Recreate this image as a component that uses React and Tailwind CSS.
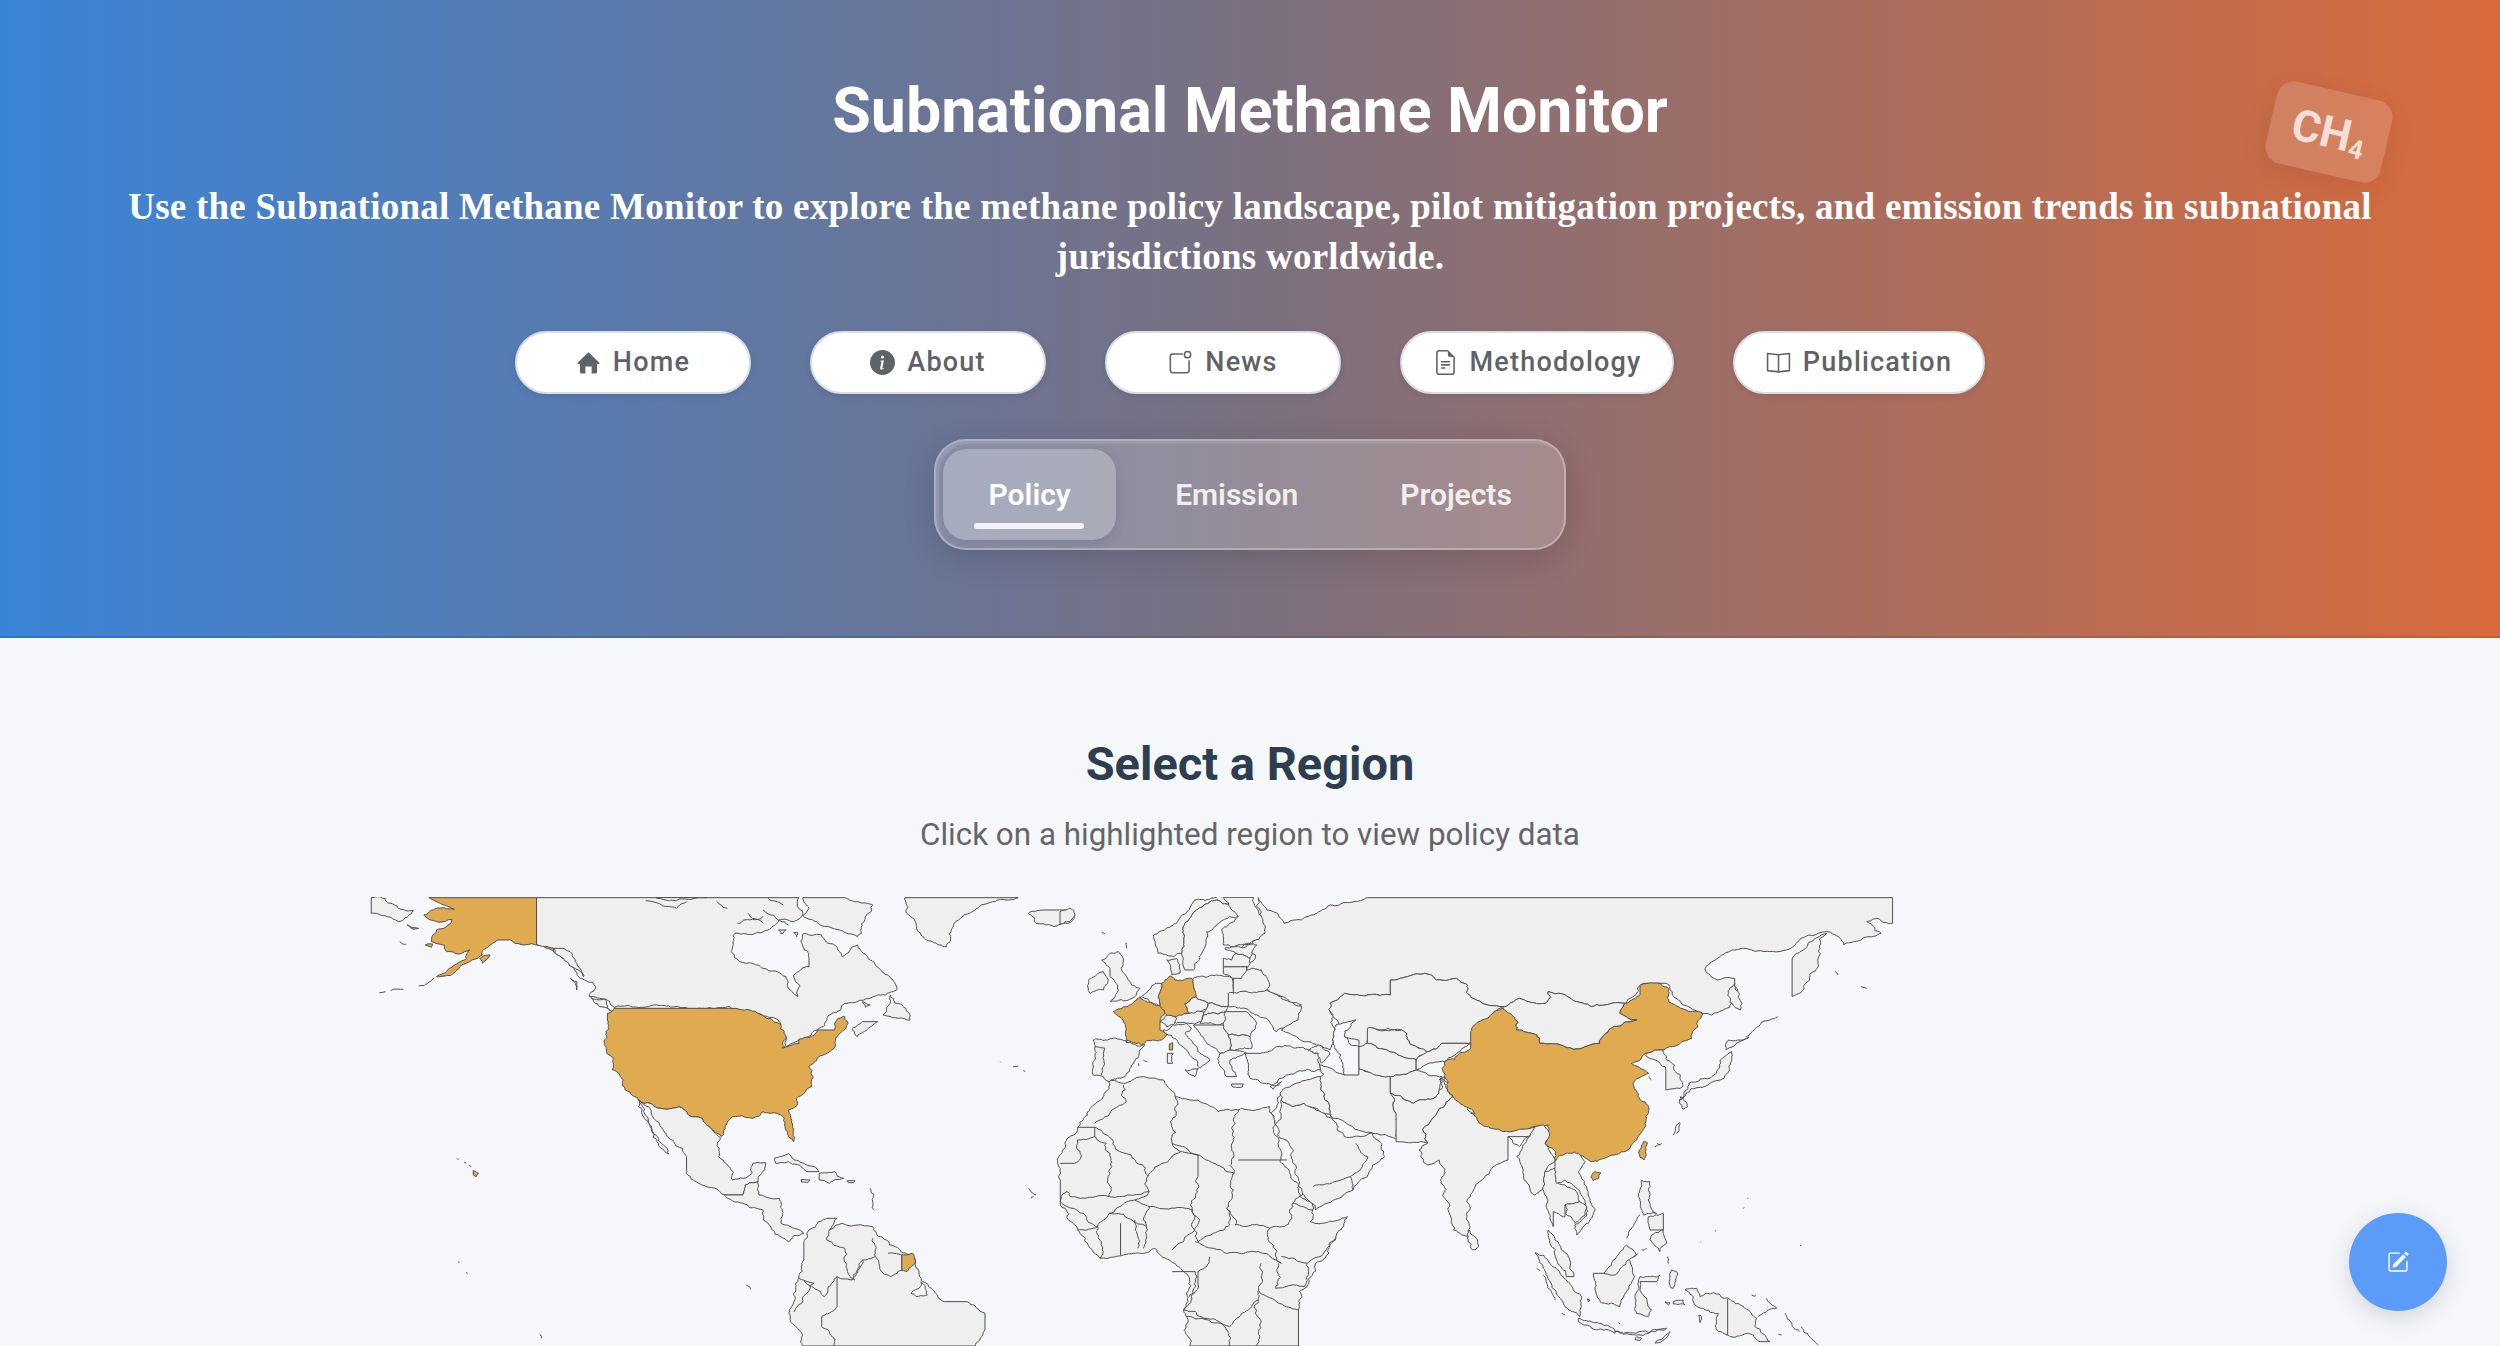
import React from 'react'
import {
  BsInfoCircleFill,
  BsFileEarmarkText,
  BsPencilSquare,
} from 'react-icons/bs'

function HomeIcon({ className }) {
  return (
    <svg className={className} viewBox="0 0 16 16" fill="currentColor">
      <path d="M8 1.5 L15 8.2 Q15.3 9 14.5 9 H13.5 V14 Q13.5 15 12.5 15 H10 V10.5 H6 V15 H3.5 Q2.5 15 2.5 14 V9 H1.5 Q0.7 9 1 8.2 Z" />
    </svg>
  )
}

function NewsIcon({ className }) {
  return (
    <svg className={className} viewBox="0 0 16 16" fill="none" stroke="currentColor" strokeWidth="1">
      <path d="M9.5 2.5 H3 Q1.5 2.5 1.5 4 V13 Q1.5 14.5 3 14.5 H12 Q13.5 14.5 13.5 13 V6.5" />
      <circle cx="12.5" cy="3" r="2" />
    </svg>
  )
}

function BookIcon({ className }) {
  return (
    <svg className={className} viewBox="0 0 16 16" fill="none" stroke="currentColor" strokeWidth="1" strokeLinejoin="round">
      <path d="M8 3 L1 2.2 V13.2 L8 14 L15 13.2 V2.2 Z M8 3 V14" />
    </svg>
  )
}

const NAV = [
  { label: 'Home', icon: HomeIcon, width: 'w-[236px]' },
  { label: 'About', icon: BsInfoCircleFill, width: 'w-[236px]' },
  { label: 'News', icon: NewsIcon, width: 'w-[236px]' },
  { label: 'Methodology', icon: BsFileEarmarkText, width: 'w-[274px]' },
  { label: 'Publication', icon: BookIcon, width: 'w-[252px]' },
]

const LAND = '#efefef'
const GOLD = '#e0ab50'
const SEA = '#f5f7fb'

// map outlines, traced per region in the coordinates of the crop they came from
const AMERICAS = [
  [LAND, 'M22,53 L50,55 L75,85 L105,92 L95,108 L75,125 L40,105 L22,100 Z'],
  [GOLD, 'M135,53 L346,53 L346,193 L360,197 L380,205 L400,225 L420,250 L438,290 L425,270 L405,240 L385,215 L360,197 L320,195 L295,180 L270,180 L255,195 L240,225 L215,245 L190,270 L150,290 L175,265 L205,240 L215,210 L190,222 L170,215 L165,195 L140,185 L150,150 L178,130 L180,118 L150,125 L125,105 L150,85 L185,88 L165,75 Z'],
  [GOLD, 'M92,135 L115,145 L105,148 Z M128,195 L142,192 L140,202 Z M235,235 L255,225 L240,250 Z'],
  [LAND, 'M346,53 L860,53 L868,105 L850,125 L820,120 L800,150 L735,160 L728,215 L745,245 L790,265 L835,290 L838,320 L858,350 L862,320 L850,285 L880,260 L880,235 L868,200 L870,160 L905,165 L940,215 L945,230 L975,195 L1000,240 L1040,295 L1052,330 L1030,345 L950,370 L900,445 L885,465 L860,480 L830,505 L835,470 L825,430 L785,402 L728,385 L725,380 L498,383 L470,355 L450,350 L462,325 L440,300 L420,265 L400,235 L380,205 L346,193 Z'],
  ['none', 'M560,62 L620,85 M620,85 L640,65 M700,65 L720,85 M760,100 L790,130 M790,90 L840,135 M740,130 L790,110 M800,55 L830,75'],
  [SEA, 'M820,150 L835,150 L825,162 Z M850,158 L858,158 L856,170 Z M875,60 L905,60 L890,78 Z M580,53 L680,53 L620,62 Z'],
  [LAND, 'M380,205 L400,205 L425,250 L438,290 L415,260 Z M412,295 L425,305 L425,330 Z M452,352 L480,358 L498,395 L470,380 Z'],
  [LAND, 'M868,53 L950,53 L1005,75 L990,115 L975,170 L940,150 L895,125 L870,110 L880,85 Z'],
  [LAND, 'M1068,53 L1290,53 L1240,65 L1200,95 L1165,130 L1150,200 L1110,180 L1090,130 L1070,90 Z'],
  [LAND, 'M1040,345 L1070,385 L1078,420 L1055,415 L1025,405 Z M985,365 L1000,375 L990,382 Z M985,425 L1015,425 L975,470 L965,445 Z'],
  [LAND, 'M1310,100 L1340,90 L1395,90 L1400,115 L1360,140 L1325,130 Z'],
  [GOLD, 'M498,385 L725,385 L780,400 L825,432 L835,470 L828,505 L860,492 L860,478 L885,470 L895,450 L930,450 L938,415 L950,410 L953,445 L935,470 L925,510 L900,530 L880,560 L885,620 L860,650 L840,690 L850,785 L840,770 L825,705 L790,695 L770,715 L730,710 L708,770 L690,750 L670,715 L650,710 L625,680 L590,685 L545,660 L520,630 L495,570 L483,510 L485,420 L485,400 Z'],
  [LAND, 'M545,660 L590,685 L625,680 L650,710 L670,715 L690,750 L706,772 L703,830 L730,900 L760,890 L770,850 L795,848 L780,905 L755,915 L750,945 L715,945 L670,915 L640,870 L640,830 L600,760 L565,680 Z'],
  [LAND, 'M548,665 L565,720 L605,822 L585,790 L560,720 Z'],
  [LAND, 'M715,945 L750,945 L755,915 L780,905 L782,945 L822,955 L825,1030 L870,1060 L840,1085 L800,1030 L790,990 L750,970 Z'],
  [LAND, 'M812,835 L840,820 L870,850 L900,875 L875,875 L840,845 L815,850 Z M900,880 L930,875 L948,895 L920,910 L900,900 Z M865,898 L882,900 L878,908 L865,906 Z M955,902 L970,902 L968,908 L957,908 Z'],
  [LAND, 'M870,1085 L880,1050 L915,1015 L935,1015 L920,1050 L945,1030 L1005,1040 L1020,1070 L1060,1115 L1085,1130 L1100,1195 L1145,1265 L1190,1265 L1225,1300 L1225,1350 L1205,1398 L868,1398 L840,1300 L860,1195 L870,1140 Z'],
  [SEA, 'M1080,1240 L1100,1205 L1112,1245 L1090,1250 Z'],
  ['none', 'M920,1050 L915,1080 L950,1105 L955,1170 L970,1200 L985,1140 L1010,1130 L1005,1075 M1010,1130 L1020,1170 L1040,1190 L1065,1170 M1035,1120 L1062,1125 L1062,1170 M985,1140 L965,1200 L935,1190 L910,1250 L870,1200 M860,1195 L890,1210 L850,1295 M935,1280 L905,1310 L905,1340 L930,1398 M935,1190 L935,1280'],
  [GOLD, 'M1062,1125 L1082,1120 L1087,1150 L1072,1175 L1062,1170 Z'],
  [GOLD, 'M222,872 L232,880 L228,890 L222,885 Z'],
  ['none', 'M190,835 L193,840 M204,846 L208,850 M214,856 L218,860 M115,318 L145,295 M38,338 L50,335 M60,332 L85,328 M78,185 L90,193 M1255,545 L1256,547 M1280,560 L1290,558 M1300,572 L1304,574 M757,1215 L765,1228 M352,1362 L356,1375 M1310,925 L1325,945 M1315,955 L1320,950 M1000,925 L1008,990 M192,1145 L195,1147 M208,1178 L211,1180'],
]

const EURASIA = [
  // africa
  [LAND, 'M190,600 L215,610 L250,590 L285,600 L305,650 L345,660 L380,695 L420,685 L470,680 L480,735 L510,900 L545,990 L540,1025 L560,1030 L605,1010 L600,1020 L585,1075 L550,1150 L535,1220 L520,1290 L520,1398 L330,1398 L320,1290 L330,1200 L320,1175 L295,1140 L270,1105 L215,1125 L175,1135 L135,1050 L105,975 L105,900 L110,810 L135,745 L160,680 Z'],
  ['none', 'M135,742 L165,742 L165,770 L135,780 L130,850 L105,850 M165,742 L258,888 L260,935 L190,950 L185,790 L165,770 M165,730 L205,680 L220,665 L215,615 M305,650 L300,790 L315,815 L258,888 M300,790 L345,825 L408,880 L415,690 M415,840 L500,840 M315,815 L345,825 L345,890 L335,990 L260,980 L235,960 L260,935 M408,880 L405,945 L395,985 L400,1035 L345,1085 L335,990 M395,985 L410,1035 L470,1045 L495,1040 L510,970 L530,920 M190,950 L140,955 L115,935 L105,965 L145,1000 L170,1040 L190,1000 L235,960 M260,980 L255,1040 L250,1105 M335,990 L340,1045 L300,1110 M190,1000 L230,1020 L255,1040 M210,1030 L210,1125 M235,1020 L240,1105 M170,1040 L175,1135 M135,1050 L170,1040 M340,1085 L395,1120 L450,1115 L490,1150 L470,1045 M365,1130 L345,1175 L345,1215 L320,1290 L350,1310 L400,1340 L450,1260 L455,1150 M510,970 L545,990 M585,1075 L535,1150 L490,1130 M535,1150 L530,1220 L480,1225 L485,1150 M450,1230 L520,1290 M325,1310 L385,1330 L400,1398 M300,1175 L340,1175 L330,1250 M450,1260 L445,1398'],
  [SEA, 'M490,645 L505,670 L480,735 L472,700 Z'],
  // middle east
  [LAND, 'M490,660 L510,680 L530,670 L580,720 L600,770 L650,760 L670,830 L640,890 L615,930 L550,990 L520,920 L480,735 Z'],
  ['none', 'M545,920 L610,890 L615,930 M610,890 L640,830 L620,790'],
  [LAND, 'M495,625 L560,590 L560,620 L580,715 L530,670 L510,680 L490,660 Z'],
  [LAND, 'M555,555 L600,585 L630,565 L680,590 L680,640 L690,700 L695,780 L650,760 L600,725 L580,715 L560,620 Z'],
  [LAND, 'M680,590 L725,570 L770,590 L760,650 L720,670 L680,640 Z'],
  [LAND, 'M690,700 L680,640 L720,670 L760,650 L770,595 L790,650 L740,740 L745,790 L690,785 Z'],
  // russia and central asia
  [LAND, 'M450,53 L465,90 L495,130 L525,120 L555,95 L575,75 L640,53 L1555,53 L1555,130 L1530,115 L1510,125 L1535,160 L1470,195 L1440,155 L1395,175 L1370,210 L1340,215 L1300,205 L1275,210 L1230,275 L1250,300 L1280,295 L1280,320 L1275,370 L1240,405 L1220,400 L1190,375 L1160,310 L1120,310 L1090,370 L1030,380 L985,345 L955,335 L950,370 L905,355 L875,380 L820,350 L795,295 L760,300 L740,280 L680,300 L680,345 L600,340 L575,370 L580,440 L575,510 L530,485 L490,450 L525,375 L465,325 L430,265 L445,225 L420,205 L440,190 L462,150 Z'],
  [LAND, 'M575,370 L600,340 L680,345 L680,300 L740,280 L760,300 L795,295 L820,350 L875,380 L860,410 L825,450 L820,490 L770,490 L745,515 L725,500 L700,450 L645,445 L640,500 L615,520 L625,480 L600,470 L590,430 Z'],
  [LAND, 'M640,445 L700,450 L725,500 L745,520 L725,540 L690,520 L640,490 Z'],
  [LAND, 'M625,500 L640,490 L690,520 L725,540 L725,570 L680,590 L625,565 Z'],
  [LAND, 'M745,515 L770,490 L820,490 L775,545 L725,570 L725,540 Z'],
  [SEA, 'M585,435 L620,420 L600,470 L625,500 L625,585 L600,585 L595,540 L580,480 Z'],
  // south asia
  [LAND, 'M775,590 L810,640 L815,690 L880,740 L945,745 L920,770 L885,770 L885,840 L855,870 L825,930 L815,1070 L790,1050 L765,840 L745,855 L730,810 L745,790 L740,740 L790,650 Z'],
  [LAND, 'M818,1050 L832,1080 L828,1110 L820,1105 Z'],
  ['none', 'M820,700 L880,745 M885,770 L905,800 L920,770 M765,600 L775,590'],
  // china and neighbours
  [LAND, 'M875,380 L905,355 L950,370 L955,335 L985,345 L1030,380 L1090,370 L1080,400 L1110,420 L1055,460 L1045,490 L1000,508 L940,490 L935,465 L900,450 L895,410 Z'],
  [GOLD, 'M875,385 L895,410 L900,450 L935,465 L940,490 L1000,508 L1045,490 L1055,460 L1110,420 L1080,400 L1090,370 L1115,345 L1115,315 L1150,310 L1165,325 L1170,370 L1195,390 L1222,397 L1205,475 L1155,510 L1125,520 L1100,550 L1130,580 L1105,605 L1130,680 L1125,725 L1100,795 L1070,825 L1030,845 L1005,825 L975,850 L950,790 L955,735 L890,755 L835,730 L810,680 L780,610 L775,545 L820,505 L820,455 L840,420 Z'],
  [LAND, 'M1125,520 L1155,510 L1175,555 L1185,625 L1160,630 L1160,570 L1150,550 Z'],
  [LAND, 'M1275,515 L1270,560 L1255,600 L1195,640 L1185,660 L1200,610 L1240,590 L1255,540 Z M1270,480 L1305,470 L1265,510 Z M1280,310 L1290,390 L1270,350 Z M1185,650 L1198,680 L1190,688 Z'],
  [LAND, 'M1380,350 L1380,240 L1440,160 L1425,250 L1400,320 Z'],
  ['none', 'M1455,275 L1460,285 M1500,320 L1510,325 M1355,410 L1300,470 M1130,590 L1135,600 M1185,730 L1178,760 M1145,790 L1150,795'],
]

const EUROPE = [
  [LAND, 'M0,65 L30,55 L45,75 L25,95 L0,103 Z'],
  [LAND, 'M100,450 L160,445 L198,452 L200,458 L255,465 L240,480 L215,525 L195,560 L150,575 L130,560 L100,555 L105,500 Z'],
  ['none', 'M105,470 L135,475 L125,555'],
  [LAND, 'M280,135 L340,105 L405,30 L500,22 L515,50 L470,30 L410,60 L370,110 L365,190 L340,200 L295,190 Z'],
  [LAND, 'M370,110 L410,60 L470,30 L515,50 L535,80 L490,90 L440,125 L430,180 L400,240 L375,240 L365,190 Z'],
  [LAND, 'M490,22 L580,22 L615,130 L570,160 L490,165 L485,120 L535,80 L510,50 Z'],
  [LAND, 'M320,210 L350,205 L360,250 L335,255 Z'],
  [LAND, 'M125,210 L150,190 L175,185 L190,215 L185,240 L215,285 L240,295 L225,320 L150,335 L175,300 L150,260 L150,235 Z'],
  [LAND, 'M85,270 L130,245 L145,270 L130,300 L90,310 Z'],
  [LAND, 'M245,320 L290,280 L305,280 L295,320 L300,348 L270,335 Z'],
  [LAND, 'M400,265 L470,255 L518,265 L520,320 L505,350 L445,340 L408,320 Z'],
  [LAND, 'M375,340 L408,320 L445,340 L440,355 L388,370 Z'],
  [LAND, 'M440,355 L445,340 L505,350 L495,365 L430,375 Z'],
  [LAND, 'M320,375 L388,370 L430,365 L425,395 L380,400 L330,390 Z'],
  [LAND, 'M300,395 L320,375 L350,385 L340,405 L320,410 Z'],
  [LAND, 'M320,432 L310,420 L340,405 L380,400 L395,415 L375,430 L420,490 L450,510 L420,535 L410,510 L380,480 L345,445 Z'],
  [LAND, 'M375,540 L415,535 L405,560 L385,550 Z M322,490 L340,490 L338,520 L322,520 Z'],
  [LAND, 'M430,375 L495,365 L505,395 L470,405 L420,400 Z'],
  [LAND, 'M505,310 L620,300 L660,320 L725,350 L715,390 L650,425 L620,385 L570,365 L505,350 Z'],
  [LAND, 'M520,250 L580,235 L605,240 L630,285 L620,300 L520,310 Z'],
  [LAND, 'M495,365 L560,365 L590,400 L570,440 L505,435 L490,405 Z'],
  [LAND, 'M490,230 L560,230 L545,265 L515,265 L490,250 Z'],
  [LAND, 'M490,205 L515,210 L530,190 L570,205 L565,230 L490,230 Z'],
  [LAND, 'M495,175 L590,165 L570,205 L530,190 Z'],
  [LAND, 'M505,435 L570,440 L575,475 L510,480 Z'],
  [LAND, 'M400,405 L470,405 L490,405 L505,435 L510,480 L480,490 L455,470 L420,430 Z'],
  [LAND, 'M480,490 L510,480 L560,490 L510,510 L530,560 L500,560 L475,520 Z M515,582 L550,582 L548,590 L515,588 Z M630,590 L665,575 L640,598 Z'],
  [LAND, 'M555,490 L600,490 L650,470 L745,480 L775,490 L780,540 L680,555 L640,585 L570,565 Z'],
  [LAND, 'M745,480 L775,465 L810,490 L785,520 L775,490 Z'],
  [GOLD, 'M160,365 L200,350 L240,320 L300,348 L320,368 L300,395 L300,420 L320,432 L305,450 L260,452 L245,465 L200,452 L198,420 L185,385 Z'],
  [GOLD, 'M330,258 L345,270 L395,265 L408,320 L375,340 L388,370 L350,380 L320,375 L300,348 L295,320 L305,280 Z'],
  [GOLD, 'M328,462 L338,458 L338,480 L328,480 Z'],
  ['none', 'M125,128 L135,132 M198,158 L200,175 M250,510 L262,515 M235,520 L237,528'],
]

const SE_ASIA = [
  [LAND, 'M130,75 L148,100 L135,130 L165,185 L135,215 L130,260 L105,285 L95,280 L70,210 L50,170 L75,130 L100,90 Z'],
  [LAND, 'M135,215 L165,205 L175,250 L225,270 L235,310 L195,315 L195,350 L160,335 L160,380 L140,290 L130,260 Z'],
  [LAND, 'M165,185 L190,165 L235,160 L255,185 L235,215 L265,275 L285,330 L265,370 L230,405 L225,375 L260,345 L255,300 L225,260 L195,240 L170,250 L165,205 Z'],
  [LAND, 'M195,315 L240,305 L260,320 L255,345 L225,370 L200,345 Z'],
  [LAND, 'M145,390 L165,420 L205,470 L222,530 L200,530 L170,480 L150,420 Z'],
  [LAND, 'M105,458 L130,465 L190,530 L245,590 L240,650 L195,620 L165,570 Z'],
  [LAND, 'M280,520 L310,520 L350,470 L380,435 L410,465 L385,480 L405,530 L375,580 L360,620 L300,605 L285,570 Z'],
  ['none', 'M310,520 L345,525 L385,480'],
  [LAND, 'M235,655 L300,670 L345,690 L345,700 L290,690 L235,665 Z M345,695 L480,690 L500,685 L420,705 Z M410,710 L425,715 L420,722 L405,718 Z M465,730 L510,695 L480,728 Z'],
  [LAND, 'M420,530 L480,525 L470,545 L420,545 L425,580 L455,630 L445,650 L410,640 L405,590 Z'],
  [LAND, 'M425,240 L450,245 L445,300 L470,340 L430,345 L415,290 Z M455,405 L490,390 L500,430 L480,455 L450,420 Z M445,350 L490,340 L490,390 L450,390 Z'],
  ['none', 'M420,345 L380,415 M425,450 L440,445 M400,470 L415,460 M503,470 L505,490 M110,505 L120,512 M130,525 L165,600 M185,640 L195,645 M355,668 L360,672 M540,68 L520,105 M465,140 L485,130 M742,295 L745,296 M730,325 L733,323 M645,392 L648,393 M602,425 L604,427 M900,436 L904,436'],
  [LAND, 'M555,570 L590,565 L600,590 L640,578 L745,630 L770,655 L765,680 L810,725 L780,725 L745,700 L690,710 L650,690 L655,640 L585,615 L580,590 Z'],
  ['none', 'M683,597 L683,705'],
  [LAND, 'M515,510 L530,515 L520,565 L510,560 Z M495,605 L510,608 L505,615 Z M520,605 L550,600 L555,615 L520,612 Z M597,645 L605,650 L600,668 Z M262,597 L270,600 L265,606 Z'],
  ['none', 'M775,650 L830,625 L800,595 M855,640 L900,695 M905,680 L955,735 M835,703 L845,705 M755,585 L768,587'],
  [GOLD, 'M430,125 L442,128 L432,180 L420,172 L418,150 Z'],
  [GOLD, 'M285,215 L302,218 L296,235 L280,242 L273,230 Z'],
]

// the traced outlines are coarse: break long edges up so coasts read as coasts.
// the offset hangs on the edge's end points only, so two countries sharing an edge stay in step
function hash(x, y) {
  const s = Math.sin(x * 12.9898 + y * 78.233) * 43758.5453
  return s - Math.floor(s)
}

function jag(a, b, amp, out) {
  const len = Math.hypot(b[0] - a[0], b[1] - a[1])
  if (len < 7 || a[0] === b[0] || a[1] === b[1]) {
    out.push(b)
    return
  }
  const swap = a[0] > b[0] || (a[0] === b[0] && a[1] > b[1])
  const [p, q] = swap ? [b, a] : [a, b]
  const size = Math.min(len * 0.16, amp)
  const m = [
    (p[0] + q[0]) / 2 + (hash(p[0] + q[0], p[1] - q[1]) - 0.5) * 2 * size,
    (p[1] + q[1]) / 2 + (hash(p[1] + q[1], q[0] - p[0]) - 0.5) * 2 * size,
  ]
  jag(a, m, amp, out)
  jag(m, b, amp, out)
}

function roughen(d, amp) {
  return d.replace(/M[^MZ]+/g, (sub) => {
    const pts = sub.match(/-?[\d.]+,-?[\d.]+/g).map((p) => p.split(',').map(Number))
    const out = [pts[0]]
    const closed = d.includes('Z')
    const list = closed ? [...pts, pts[0]] : pts
    for (let i = 1; i < list.length; i++) jag(list[i - 1], list[i], amp, out)
    return 'M' + out.map((p) => `${p[0].toFixed(1)},${p[1].toFixed(1)}`).join(' L')
  })
}

function MapGroup({ paths, transform, amp }) {
  return (
    <g transform={transform} stroke="#4f4f4f" strokeWidth="1" strokeLinejoin="round">
      {paths.map(([fill, d], i) => (
        <path key={i} d={roughen(d, amp)} fill={fill} vectorEffect="non-scaling-stroke" />
      ))}
    </g>
  )
}

function WorldMap() {
  return (
    <svg className="block w-[2500px] h-[449px]" viewBox="0 897 2500 449">
      <MapGroup paths={AMERICAS} transform="translate(360 880) scale(0.5102 0.3333)" amp={7} />
      <MapGroup paths={EURASIA} transform="translate(1000 880) scale(0.574 0.3333)" amp={7} />
      <MapGroup paths={EUROPE} transform="translate(1060 890) scale(0.3333)" amp={5} />
      <MapGroup paths={SE_ASIA} transform="translate(1500 1100) scale(0.3333)" amp={5} />
    </svg>
  )
}

export default function App() {
  return (
    <div className="relative h-[1346px] w-[2500px] overflow-hidden bg-[#f5f7fb] font-['Roboto',sans-serif]">
      {/* Header */}
      <header className="relative h-[638px] flex flex-col items-center border-b-2 border-black/10 bg-[linear-gradient(90deg,#3a84d8,#7a7080_50%,#d96a3b)] text-white">
        <h1 className="mt-[70px] text-[62.7px] leading-[82px] font-bold">Subnational Methane Monitor</h1>
        <p className="mt-[30px] w-[2300px] text-center text-[37px] leading-[50px] tracking-[0.25px] font-bold font-['Liberation_Serif',serif]">
          Use the Subnational Methane Monitor to explore the methane policy landscape, pilot mitigation projects, and emission trends in subnational jurisdictions worldwide.
        </p>

        <div className="absolute right-[112px] top-[90px] flex h-[84px] w-[118px] rotate-[13deg] items-center justify-center rounded-[17px] bg-white/15 font-bold text-[44px] text-white/75 shadow-[0_8px_30px_rgba(0,0,0,0.06)]">
          CH<sub className="text-[26px] translate-y-[4px]">4</sub>
        </div>

        {/* Nav */}
        <nav className="mt-[49px] flex gap-[59px]">
          {NAV.map(({ label, icon: Icon, width }) => (
            <a
              key={label}
              className={`flex h-[63px] ${width} items-center justify-center gap-[12px] rounded-[32px] border-2 border-[#d8dde6] bg-white text-[27px] font-medium tracking-[1.2px] text-[#5f6266] shadow-[0_2px_6px_rgba(0,0,0,0.1)]`}
            >
              <Icon className="h-[25px] w-[25px]" />
              {label}
            </a>
          ))}
        </nav>

        {/* Tabs */}
        <div className="mt-[45px] flex h-[111px] items-center gap-4 rounded-[32px] border-2 border-white/30 bg-white/20 pl-[7px] pr-[9px] shadow-[0_8px_32px_rgba(0,0,0,0.14),inset_3px_3px_0_rgba(255,255,255,0.1)]">
          <div className="relative flex h-[91px] w-[173px] items-center justify-center rounded-[24px] bg-white/25 text-[30px] font-semibold shadow-[0_4px_12px_rgba(0,0,0,0.1)]">
            Policy
            <span className="absolute bottom-[11px] left-[31px] h-[6px] w-[110px] rounded-full bg-white/85" />
          </div>
          <div className="px-[43px] text-[30px] font-semibold text-white/85">Emission</div>
          <div className="px-[43px] text-[30px] font-semibold text-white/85">Projects</div>
        </div>
      </header>

      {/* Region selection */}
      <main className="flex flex-col items-center">
        <h2 className="mt-[96px] text-[47px] leading-[60px] font-bold text-[#2c3e50]">Select a Region</h2>
        <p className="mt-[21px] text-[31.4px] leading-[40px] text-[#666666]">Click on a highlighted region to view policy data</p>
        <div className="mt-[42px] w-full">
          <WorldMap />
        </div>
      </main>

      <button className="absolute left-[2349px] top-[1213px] flex h-[98px] w-[98px] items-center justify-center rounded-full bg-[#5a9cf8] text-white shadow-[0_6px_24px_rgba(0,0,0,0.15)]">
        <BsPencilSquare className="h-[22px] w-[22px]" />
      </button>
    </div>
  )
}
